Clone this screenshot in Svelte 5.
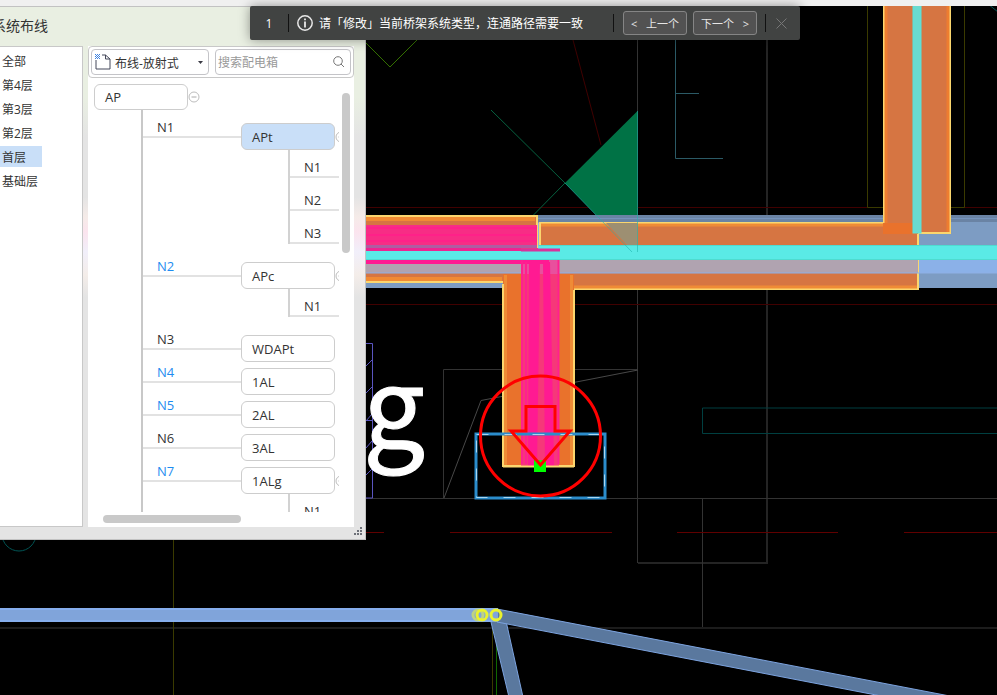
<script lang="ts">
    type Branch = {
        circuit: string;
        blue?: boolean;
        box: string;
        selected?: boolean;
        children?: string[];
    };

    const floors = ['全部', '第4层', '第3层', '第2层', '首层', '基础层'];
    let activeFloor = $state('首层');

    const branches: Branch[] = [
        { circuit: 'N1', box: 'APt', selected: true, children: ['N1', 'N2', 'N3'] },
        { circuit: 'N2', blue: true, box: 'APc', children: ['N1'] },
        { circuit: 'N3', box: 'WDAPt' },
        { circuit: 'N4', blue: true, box: '1AL' },
        { circuit: 'N5', blue: true, box: '2AL' },
        { circuit: 'N6', box: '3AL' },
        { circuit: 'N7', blue: true, box: '1ALg', children: ['N1'] }
    ];
</script>

{#snippet toggle()}
    <button class="toggle" aria-label="折叠">
        <svg width="12" height="12" viewBox="0 0 12 12">
            <circle cx="6" cy="6" r="5" fill="#fff" stroke="#bdbdbd" />
            <path d="M3.5 6h5" stroke="#aaa" />
        </svg>
    </button>
{/snippet}

<main class="desktop">
    <!-- CAD canvas -->
    <svg class="drawing" width="100%" height="100%" aria-hidden="true">
        <!-- background line work -->
        <g fill="none" stroke="#333">
            <path d="M637.500 6V563" />
            <path d="M767 6V563H638" stroke="#242424" stroke-width="2" />
            <path d="M443.500 498V369.500H638" />
            <path d="M444 498L481 400.500L638 370" stroke="#484848" />
            <path d="M366 498.500H3000" />
            <path d="M702.500 498V628" />
            <path d="M0 628H3000" stroke="#1c1c1c" stroke-width="2" />
        </g>
        <g fill="none" stroke="#400000">
            <path d="M366 207.500H3000M366 304.500H3000" />
            <path d="M360 532.500H384M450 532.500H612M677 532.500H838M904 532.500H1065" stroke="#600000" />
            <path d="M573 40L601 145" />
        </g>
        <path d="M366 43L390 67L418 39" fill="none" stroke="#347000" />
        <path d="M675.500 6V158.500H723M675.500 93.500H699" fill="none" stroke="#2b5a66" />
        <path d="M867.500 6V207.500H964.500V6" fill="none" stroke="#3a3a00" />
        <path d="M3000 408H702.500V433.500H3000" fill="none" stroke="#003f40" />
        <path d="M988 4L998 12" stroke="#005555" />
        <circle cx="19" cy="534" r="17" fill="none" stroke="#005555" />
        <path d="M173.500 540V3000M492.500 622V3000" stroke="#3a3a00" />
        <path d="M496.500 622V3000" stroke="#126800" />
        <g fill="none" stroke="#5a55c0">
            <path d="M360 343.500H372.500V498H360M360 420.500H372" />
            <path d="M366 366L372 360M366 393L372 387M366 421L372 414M366 448L372 441M366 475L372 469" />
        </g>
        <text class="cad-letter" x="363" y="448">g</text>

        <!-- blue tray under the orange one -->
        <path d="M491 110L565 183L502 247" fill="none" stroke="#06603f" />
        <path d="M565 183L637.500 111V252H632Z" fill="#007245" />
        <g>
            <rect x="360" y="215" width="2640" height="73" fill="#7d9cc3" />
            <rect x="537" y="215" width="2463" height="7" fill="#6a83a4" />
            <path d="M537 218.500H3000" stroke="#7593bc" />
            <rect x="918" y="260" width="2082" height="13" fill="#8bb1e8" />
        </g>

        <!-- orange trays -->
        <g fill="#d67542">
            <rect x="360" y="216" width="177" height="66" stroke="#fbd66e" stroke-width="2" />
            <path d="M360 219H535M360 279H502" stroke="#f18a34" stroke-width="4" />
            <rect x="540" y="223" width="378" height="66" stroke="#fbd66e" stroke-width="2" />
            <path d="M541 225H917M574 287H917" stroke="#ef8b36" stroke-width="3" />
            <rect x="884" y="0" width="66" height="233" stroke="#fbd66e" stroke-width="2" />
            <path d="M886 6V223M948 6V232" stroke="#ed7d30" stroke-width="3" />
            <rect x="883" y="223" width="35" height="11" fill="#e9722c" />
        </g>
        <path d="M606 223H637.500V245H627Z" fill="#9d8f72" />
        <rect x="360" y="264" width="558" height="9" fill="#b0a3b0" />
        <rect x="559" y="260" width="359" height="13" fill="#b0a3b0" />
        <path d="M360 273H3000" stroke="#8eafe6" />
        <rect x="503" y="274" width="71" height="193" fill="#e9722c" />
        <path d="M503 284V466H574V290" fill="none" stroke="#fbd66e" stroke-width="2" />
        <path d="M505.500 275V465M571.500 275V465" stroke="#ef8b36" stroke-width="3" />

        <!-- cables -->
        <rect x="360" y="225" width="177" height="20" fill="#f72d85" />
        <path d="M360 228H537M360 235H537M360 241H537" stroke="#ff2189" stroke-width="2" />
        <path d="M360 246.500H537" stroke="#af5ca1" stroke-width="3" />
        <rect x="360" y="248" width="200" height="3" fill="#ee2391" />
        <rect x="521" y="248" width="38" height="218" fill="#f63879" />
        <rect x="521" y="260" width="38" height="14" fill="#e8509d" />
        <path d="M360 262H549" stroke="#ff1a92" stroke-width="4" />
        <path d="M522 249V464M526 262V464M558.500 249V464" stroke="#ff2090" stroke-width="2" />
        <path d="M529 262H540L537 466H528ZM543 262H550L554 466H545Z" fill="#ff1a92" />
        <rect x="360" y="251" width="200" height="9" fill="#5aeae6" />
        <rect x="538" y="245" width="2462" height="15" fill="#5aeae6" />
        <path d="M538 245.500H3000M538 259.500H3000M360 259.500H538" stroke="#4edbd0" />
        <path d="M521 250H560" stroke="#d8329c" stroke-width="3" />
        <path d="M538.500 223V246" stroke="#8fb4df" />
        <rect x="913" y="0" width="8" height="233" fill="#6adbd0" stroke="#56e4dc" />
        <path d="M637.500 111V252M565 183L632 252" fill="none" stroke="#22b5ad" opacity="0.600" />

        <!-- device outline and direction marker -->
        <rect x="476" y="434" width="129" height="64" fill="none" stroke="#2b8ccb" stroke-width="3" />
        <rect x="476.500" y="434.500" width="128" height="63" fill="none" stroke="#a9d6f0" stroke-dasharray="12 16" />
        <path d="M503 466.500H574" stroke="#fbd66e" stroke-width="2" />
        <rect x="534" y="460" width="12" height="12" fill="#00ff00" />
        <g fill="none" stroke="#ff0000" stroke-width="3">
            <circle cx="540.500" cy="436" r="60" />
            <path d="M526 431V406.500H555V431H570L540.500 465L511 431Z" />
        </g>

        <!-- lower tray -->
        <g fill="#5a789e" stroke="#7ca3df">
            <path d="M491 622L509 697L605 3000H610L523 697L504 612Z" />
            <path d="M497 609L3000 1090V1104L497 622Z" />
        </g>
        <rect x="0" y="608" width="498" height="14" fill="#80a4da" />
        <path d="M0 609H498M0 621H492" stroke="#86aeed" stroke-width="2" />
        <g fill="none" stroke="#eaf22e" stroke-width="3">
            <circle cx="478" cy="615" r="5" stroke="#bdd383" />
            <circle cx="482" cy="615" r="5" />
            <circle cx="496" cy="615" r="5" />
        </g>
    </svg>

    <div class="app-edge"></div>

    <section class="window" aria-label="系统布线">
        <header class="window-title">系统布线</header>
        <div class="window-body">
            <nav class="floors">
                {#each floors as floor}
                    <button
                        class="floor"
                        class:active={floor === activeFloor}
                        onclick={() => (activeFloor = floor)}
                    >{floor}</button>
                {/each}
            </nav>

            <div class="panel">
                <div class="toolbar">
                    <label class="field mode">
                        <svg width="17" height="16" viewBox="0 0 17 16">
                            <path d="M1 6V15H15V5L10.500 1H7M10.500 1V5H15" fill="none" stroke="#45485a" />
                            <path d="M0 .5H5M0 2.500H5M0 4.500H5" stroke="#3d82e0" stroke-dasharray="1 1" />
                            <path d="M1 1.500H5M1 3.500H5" stroke="#3d82e0" stroke-dasharray="1 1" />
                        </svg>
                        <select aria-label="布线方式">
                            <option>布线-放射式</option>
                        </select>
                        <svg width="5" height="3" viewBox="0 0 5 3"><path d="M0 0H5L2.500 3Z" fill="#3a3a44" /></svg>
                    </label>
                    <label class="field search">
                        <input type="text" placeholder="搜索配电箱" aria-label="搜索配电箱" />
                        <svg width="12" height="12" viewBox="0 0 12 12" fill="none" stroke="#777">
                            <circle cx="5" cy="5" r="4.300" />
                            <path d="M8 8L11 11" />
                        </svg>
                    </label>
                </div>

                <div class="tree-view">
                    <div class="tree">
                        <div class="row root">
                            <button class="node">AP</button>
                            {@render toggle()}
                        </div>
                        <ul class="trunk">
                            {#each branches as branch}
                                <li>
                                    <div class="row">
                                        <span class="circuit" class:blue={branch.blue}>{branch.circuit}</span>
                                        <button class="node" class:selected={branch.selected}>{branch.box}</button>
                                        {#if branch.children}{@render toggle()}{/if}
                                    </div>
                                    {#if branch.children}
                                        <ul class="twigs">
                                            {#each branch.children as child}
                                                <li><span class="circuit">{child}</span></li>
                                            {/each}
                                        </ul>
                                    {/if}
                                </li>
                            {/each}
                        </ul>
                    </div>
                    <div class="v-scroll"><div class="thumb"></div></div>
                    <div class="h-scroll"><div class="thumb"></div></div>
                </div>
            </div>
        </div>
        <footer class="grip">
            <svg width="8" height="8" viewBox="0 0 8 8" fill="#6d7078">
                <path d="M6 0h2v2H6zM3 3h2v2H3zM6 3h2v2H6zM0 6h2v2H0zM3 6h2v2H3zM6 6h2v2H6z" />
            </svg>
        </footer>
    </section>

    <div class="notice" role="status">
        <span class="count">1</span>
        <span class="divider"></span>
        <svg class="info" width="16" height="16" viewBox="0 0 16 16">
            <circle cx="8" cy="8" r="7.200" fill="none" stroke="#e8e8e8" stroke-width="1.500" />
            <path d="M8 6.500V12.500M8 3.500V5.200" stroke="#e8e8e8" stroke-width="1.800" />
        </svg>
        <span class="message">请「修改」当前桥架系统类型，连通路径需要一致</span>
        <span class="divider"></span>
        <button class="step"><span>&lt;</span><span>上一个</span></button>
        <button class="step"><span>下一个</span><span>&gt;</span></button>
        <span class="divider"></span>
        <button class="close" aria-label="关闭">
            <svg width="11" height="11" viewBox="0 0 11 11"><path d="M.5 .5L10.500 10.500M10.500 .5L.5 10.500" stroke="#777" /></svg>
        </button>
    </div>
</main>

<style>
    :global(body) {
        background: #000;
    }

    .desktop {
        position: relative;
        min-height: 100vh;
        overflow: hidden;
        background: #000;
        font-family: "Open Sans", "Noto Sans CJK SC", sans-serif;
        font-size: 12px;
        color: #333;
    }

    button, input, select {
        font: inherit;
        color: inherit;
        margin: 0;
        padding: 0;
        border: 0;
        background: none;
    }

    svg {
        flex: none;
        display: block;
    }

    ul {
        list-style: none;
        margin: 0;
        padding: 0;
    }

    .drawing {
        position: absolute;
        inset: 0;
    }

    .cad-letter {
        font-family: "Noto Sans CJK SC", sans-serif;
        font-size: 110px;
        fill: #fff;
        stroke: #fff;
        stroke-width: 1px;
    }

    .app-edge {
        position: relative;
        height: 6px;
        background: #f0f0f0;
    }

    /* Floating window, dragged partly past the left edge */
    .window {
        position: absolute;
        left: -16px;
        top: 6px;
        width: 382px;
        height: 534px;
        box-sizing: border-box;
        display: flex;
        flex-direction: column;
        padding-right: 11px;
        border: 1px solid #c2c2c2;
        background: linear-gradient(#e9efe2, #e9efe2 90px, #e4e4e4 130px, #e4e4e4 190px, #f5ebe8 210px, #fbe4ee 225px, #f1effa 245px, #f4ede9 268px, #e4e4e4 290px);
    }

    .window-title {
        height: 39px;
        padding-left: 7px;
        font-size: 14px;
        line-height: 38px;
    }

    .window-body {
        flex: 1;
        min-height: 0;
        display: flex;
        gap: 5px;
    }

    .floors {
        width: 98px;
        box-sizing: border-box;
        display: flex;
        flex-direction: column;
        gap: 3px;
        padding: 3px 0 0 14px;
        border: 1px solid #c8c8c8;
        background: #fff;
    }

    .floor {
        width: 42px;
        height: 21px;
        padding-left: 2px;
        text-align: left;
        white-space: nowrap;
    }

    .floor.active {
        background: #c9dff8;
    }

    .panel {
        flex: 1;
        min-width: 0;
        display: flex;
        flex-direction: column;
        background: #fff;
    }

    .toolbar {
        display: flex;
        gap: 6px;
        padding: 2px;
        border: 1px solid #c8c8c8;
        border-radius: 4px;
    }

    .field {
        height: 24px;
        display: flex;
        align-items: center;
        border: 1px solid #c4c4c8;
        border-radius: 4px;
    }

    .mode {
        padding: 0 5px 0 3px;
        box-sizing: border-box;
        height: 26px;
        flex: 0 0 118px;
    }

    .mode select {
        flex: 1;
        min-width: 0;
        padding: 2px 0 0 3px;
        appearance: none;
    }

    .search {
        flex: 1;
        min-width: 0;
        padding: 0 5px 0 2px;
    }

    .search input {
        flex: 1;
        min-width: 0;
        outline: 0;
    }

    .search input::placeholder {
        color: #999;
    }

    .tree-view {
        flex: 1;
        min-height: 0;
        display: grid;
        grid-template: minmax(0, 1fr) 15px / minmax(0, 1fr) 15px;
    }

    .tree {
        overflow: hidden;
        padding: 6px 0 0 6px;
        font-size: 13px;
    }

    .row {
        display: flex;
        width: 260px;
        height: 33px;
    }

    .row.root {
        height: 26px;
    }

    .node {
        width: 94px;
        height: 27px;
        margin-top: 2px;
        padding-left: 10px;
        box-sizing: border-box;
        flex: none;
        border: 1px solid #cdcdcd;
        border-radius: 6px;
        background: #fff;
        text-align: left;
    }

    .root .node {
        height: 26px;
        margin-top: 0;
    }

    .node.selected {
        background: #c9dff8;
    }

    .toggle {
        width: 12px;
        height: 12px;
        margin-top: 10px;
    }

    .root .toggle {
        margin-top: 7px;
    }

    .trunk {
        margin-left: 47px;
        padding-top: 11px;
        border-left: 2px solid #c8c8c8;
    }

    .circuit {
        display: block;
        width: 98px;
        height: 17px;
        padding-left: 14px;
        box-sizing: border-box;
        border-bottom: 2px solid #e2e2e2;
        line-height: 13px;
    }

    .circuit.blue {
        color: #1e8cf0;
    }

    .twigs {
        margin: -4px 0 16px 145px;
        padding-top: 11px;
        border-left: 2px solid #d2d2d2;
    }

    .twigs li {
        height: 33px;
    }

    .twigs li:last-child {
        height: 17px;
    }

    .thumb {
        border-radius: 4px;
        background: #c9c9c9;
    }

    .v-scroll .thumb {
        width: 8px;
        height: 160px;
        margin: 15px 0 0 3px;
    }

    .h-scroll .thumb {
        width: 138px;
        height: 8px;
        margin: 3px 0 0 15px;
    }

    .grip {
        height: 12px;
        display: flex;
        justify-content: flex-end;
        margin-right: -8px;
    }

    .notice {
        position: absolute;
        left: 250px;
        top: 6px;
        height: 34px;
        width: 550px;
        box-sizing: border-box;
        display: flex;
        align-items: center;
        border-radius: 2px;
        background: #414342;
        box-shadow: 0 0 12px rgba(0, 0, 0, 0.4);
        color: #fff;
        white-space: nowrap;
    }

    .count {
        width: 38px;
        text-align: center;
    }

    .divider {
        width: 1px;
        height: 18px;
        background: #111;
    }

    .info {
        margin: 0 6px 0 8px;
    }

    .message {
        flex: 1;
    }

    .step {
        width: 64px;
        height: 24px;
        margin-left: 9px;
        display: flex;
        align-items: center;
        justify-content: space-between;
        padding: 0 7px;
        border: 1px solid #858585;
        border-radius: 3px;
        background: #525252;
        color: #e6e6e6;
        font-size: 11px;
    }

    .step + .step {
        margin: 0 8px 0 6px;
    }

    .close {
        width: 34px;
        height: 24px;
        padding-right: 3px;
        box-sizing: border-box;
        display: grid;
        place-items: center;
    }
</style>
